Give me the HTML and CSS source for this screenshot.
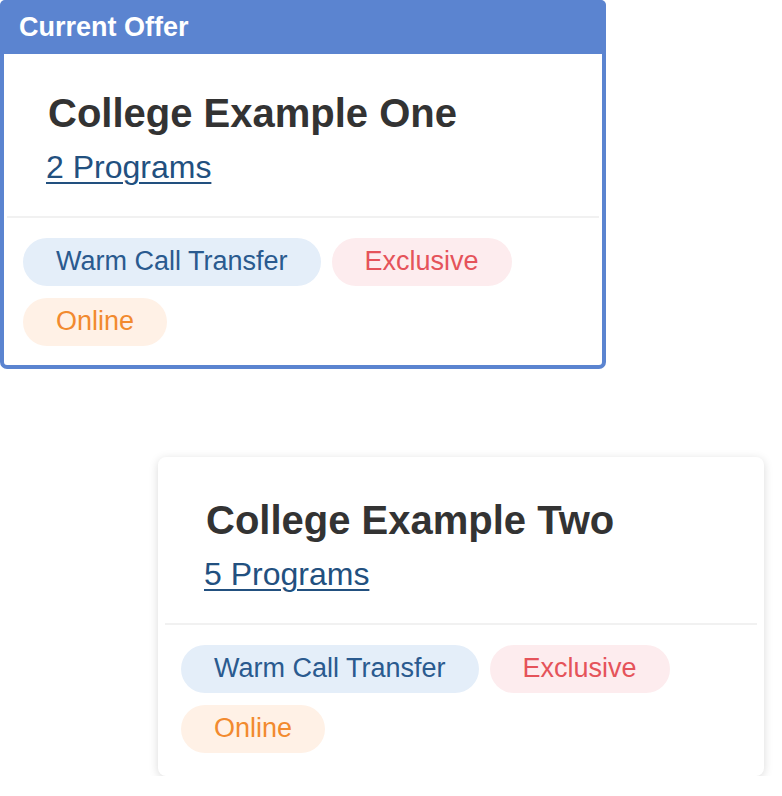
FILE: index.html
```html
<!DOCTYPE html>
<html lang="en">

<head>
    <meta charset="UTF-8">
    <meta name="viewport" content="width=device-width, initial-scale=1.0">
    <title>Offers</title>
    <link rel="stylesheet" href="styles.css">
</head>

<body>
    <div class="offer-list">
        <div class="offer-card current">
            <div class="offer-header">Current Offer</div>
            <div class="offer-body">
                <h2 class="college-name">College Example One</h2>
                <a href="#" class="programs-link">2 Programs</a>
            </div>
            <div class="divider"></div>
            <div class="tag-list">
                <span class="tag tag-blue">Warm Call Transfer</span>
                <span class="tag tag-red">Exclusive</span>
                <span class="tag tag-orange">Online</span>
            </div>
        </div>

        <div class="offer-card other">
            <div class="offer-body">
                <h2 class="college-name">College Example Two</h2>
                <a href="#" class="programs-link">5 Programs</a>
            </div>
            <div class="divider"></div>
            <div class="tag-list">
                <span class="tag tag-blue">Warm Call Transfer</span>
                <span class="tag tag-red">Exclusive</span>
                <span class="tag tag-orange">Online</span>
            </div>
        </div>
    </div>
</body>

</html>
```

FILE: styles.css
```css
* {
    box-sizing: border-box;
}

body {
    font-family: "Liberation Sans", Arial, sans-serif;
    background-color: #fff;
    margin: 0;
    padding: 0;
}

.offer-list {
    display: flex;
    flex-direction: column;
    align-items: flex-start;
}

.offer-card {
    width: 606px;
    background: #fff;
    border: 4px solid #5b84d0;
    border-radius: 7px;
}

.offer-card.other {
    margin-top: 88px;
    margin-left: 158px;
    border-color: #fff;
    border-radius: 8px;
    box-shadow: 0 2px 10px rgba(0, 0, 0, 0.15);
}

.offer-header {
    background-color: #5b84d0;
    color: #fff;
    font-size: 27px;
    font-weight: bold;
    height: 54px;
    margin: -4px -4px 0;
    padding: 0 0 4px 19px;
    line-height: 54px;
    border-radius: 5px 5px 0 0;
}

.offer-body {
    padding: 35px 20px 30px 42px;
}

.college-name {
    margin: 0 0 11px 2px;
    font-size: 40px;
    line-height: 48px;
    font-weight: bold;
    color: #333;
}

.programs-link {
    display: inline-block;
    font-size: 32px;
    line-height: 38px;
    color: #22507f;
    text-decoration: underline;
    text-underline-offset: 4px;
    text-decoration-thickness: 2px;
}

.divider {
    height: 2px;
    margin: 0 3px;
    background-color: #f1f1f1;
}

.tag-list {
    display: flex;
    flex-wrap: wrap;
    gap: 12px 11px;
    padding: 20px 20px 19px 19px;
}

.tag {
    display: inline-block;
    height: 48px;
    line-height: 47px;
    padding: 0 33px;
    border-radius: 24px;
    font-size: 27px;
}

.tag-blue {
    background-color: #e4eef9;
    color: #2a5a8f;
}

.tag-red {
    background-color: #fdecee;
    color: #e5535a;
}

.tag-orange {
    background-color: #fff1e6;
    color: #f28a2e;
}
```
